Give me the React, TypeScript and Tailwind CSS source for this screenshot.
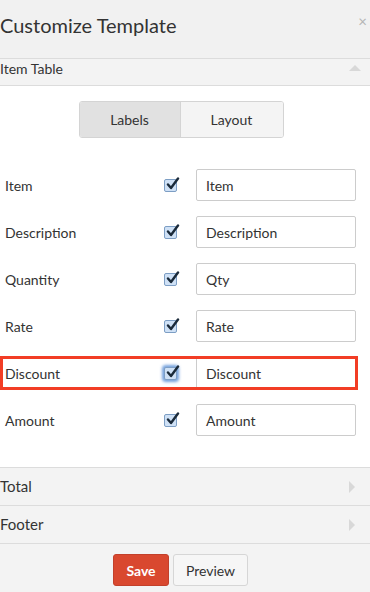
import React, { useState } from "react";

const fields = [
  { label: "Item", value: "Item" },
  { label: "Description", value: "Description" },
  { label: "Quantity", value: "Qty" },
  { label: "Rate", value: "Rate" },
  { label: "Discount", value: "Discount", highlight: true },
  { label: "Amount", value: "Amount" },
];

function CheckMark({ focused }: { focused?: boolean }) {
  return (
    <span
      className={`relative flex h-[13px] w-[13px] items-center justify-center rounded-[2px] border border-[#7d9ec4] bg-[#cfe1f6] ${
        focused ? "shadow-[0_0_3px_2px_rgba(70,130,210,0.75)]" : ""
      }`}
    >
      <svg viewBox="0 0 14 14" className="absolute -top-[3px] left-[1px] h-[14px] w-[14px]">
        <path d="M2 7.5 L5 11 L12 1.5" fill="none" stroke="#1a2a3a" strokeWidth="2.4" strokeLinecap="round" strokeLinejoin="round" />
      </svg>
    </span>
  );
}

export default function App() {
  const [tab, setTab] = useState<"labels" | "layout">("labels");

  return (
    <div className="flex h-[592px] w-[370px] flex-col bg-[#f3f3f3] text-[#333] [font-family:Lato,'Liberation_Sans',sans-serif]">
      {/* header */}
      <div className="relative flex h-[58px] shrink-0 items-center bg-[#f1f1f1]">
        <h1 className="-mt-[8px] text-[20px] font-normal leading-none">Customize Template</h1>
        <span className="absolute right-[3px] top-[14px] text-[15px] leading-none text-[#b5b5b5]">×</span>
      </div>

      {/* item table section header */}
      <div className="flex h-[28px] shrink-0 items-start justify-between border-y border-[#dcdcdc] bg-[#f3f3f3] pr-[9px]">
        <span className="mt-[1px] text-[14px] leading-[18px]">Item Table</span>
        <span className="mt-[6px] h-0 w-0 border-x-[6px] border-b-[6px] border-x-transparent border-b-[#d8d8d8]" />
      </div>

      {/* body */}
      <div className="flex flex-1 flex-col bg-white pt-[15px]">
        <div className="flex justify-center pr-[8px]">
          <div className="flex h-[37px] overflow-hidden rounded-[3px] border border-[#d4d4d4] text-[14px]">
            <button
              onClick={() => setTab("labels")}
              className={`w-[101px] border-r border-[#d4d4d4] ${tab === "labels" ? "bg-[#e1e1e1]" : "bg-[#f4f4f4]"}`}
            >
              Labels
            </button>
            <button
              onClick={() => setTab("layout")}
              className={`w-[102px] ${tab === "layout" ? "bg-[#e1e1e1]" : "bg-[#f4f4f4]"}`}
            >
              Layout
            </button>
          </div>
        </div>

        <div className="mt-[31px] flex flex-col gap-[15px]">
          {fields.map((f) => (
            <div key={f.label} className="relative flex h-[32px] items-center">
              <span className="w-[164px] pl-[5px] text-[14px]">{f.label}</span>
              <CheckMark focused={f.highlight} />
              <div className="ml-[19px] flex h-[32px] w-[160px] items-center rounded-[2px] border border-[#cccccc] pl-[9px] text-[14px]">
                {f.value}
              </div>
              {f.highlight && (
                <div className="pointer-events-none absolute -top-[1px] left-0 h-[34px] w-[358px] border-[3px] border-[#f23d25]" />
              )}
            </div>
          ))}
        </div>
      </div>

      {/* collapsed sections */}
      {["Total", "Footer"].map((s) => (
        <div key={s} className="flex h-[38px] shrink-0 items-center justify-between border-t border-[#dcdcdc] bg-[#f3f3f3] pr-[15px]">
          <span className="text-[15px]">{s}</span>
          <span className="h-0 w-0 border-y-[6px] border-l-[6px] border-y-transparent border-l-[#d8d8d8]" />
        </div>
      ))}

      {/* footer buttons */}
      <div className="flex h-[49px] shrink-0 items-start justify-center gap-[4px] border-t border-[#dcdcdc] bg-[#f3f3f3] pt-[10px] pr-[9px]">
        <button className="h-[32px] w-[56px] rounded-[3px] border border-[#c2402b] bg-[#d9482f] text-[14px] font-bold text-white">
          Save
        </button>
        <button className="h-[32px] w-[75px] rounded-[3px] border border-[#d6d6d6] bg-[#f6f6f6] text-[14px]">
          Preview
        </button>
      </div>
    </div>
  );
}
